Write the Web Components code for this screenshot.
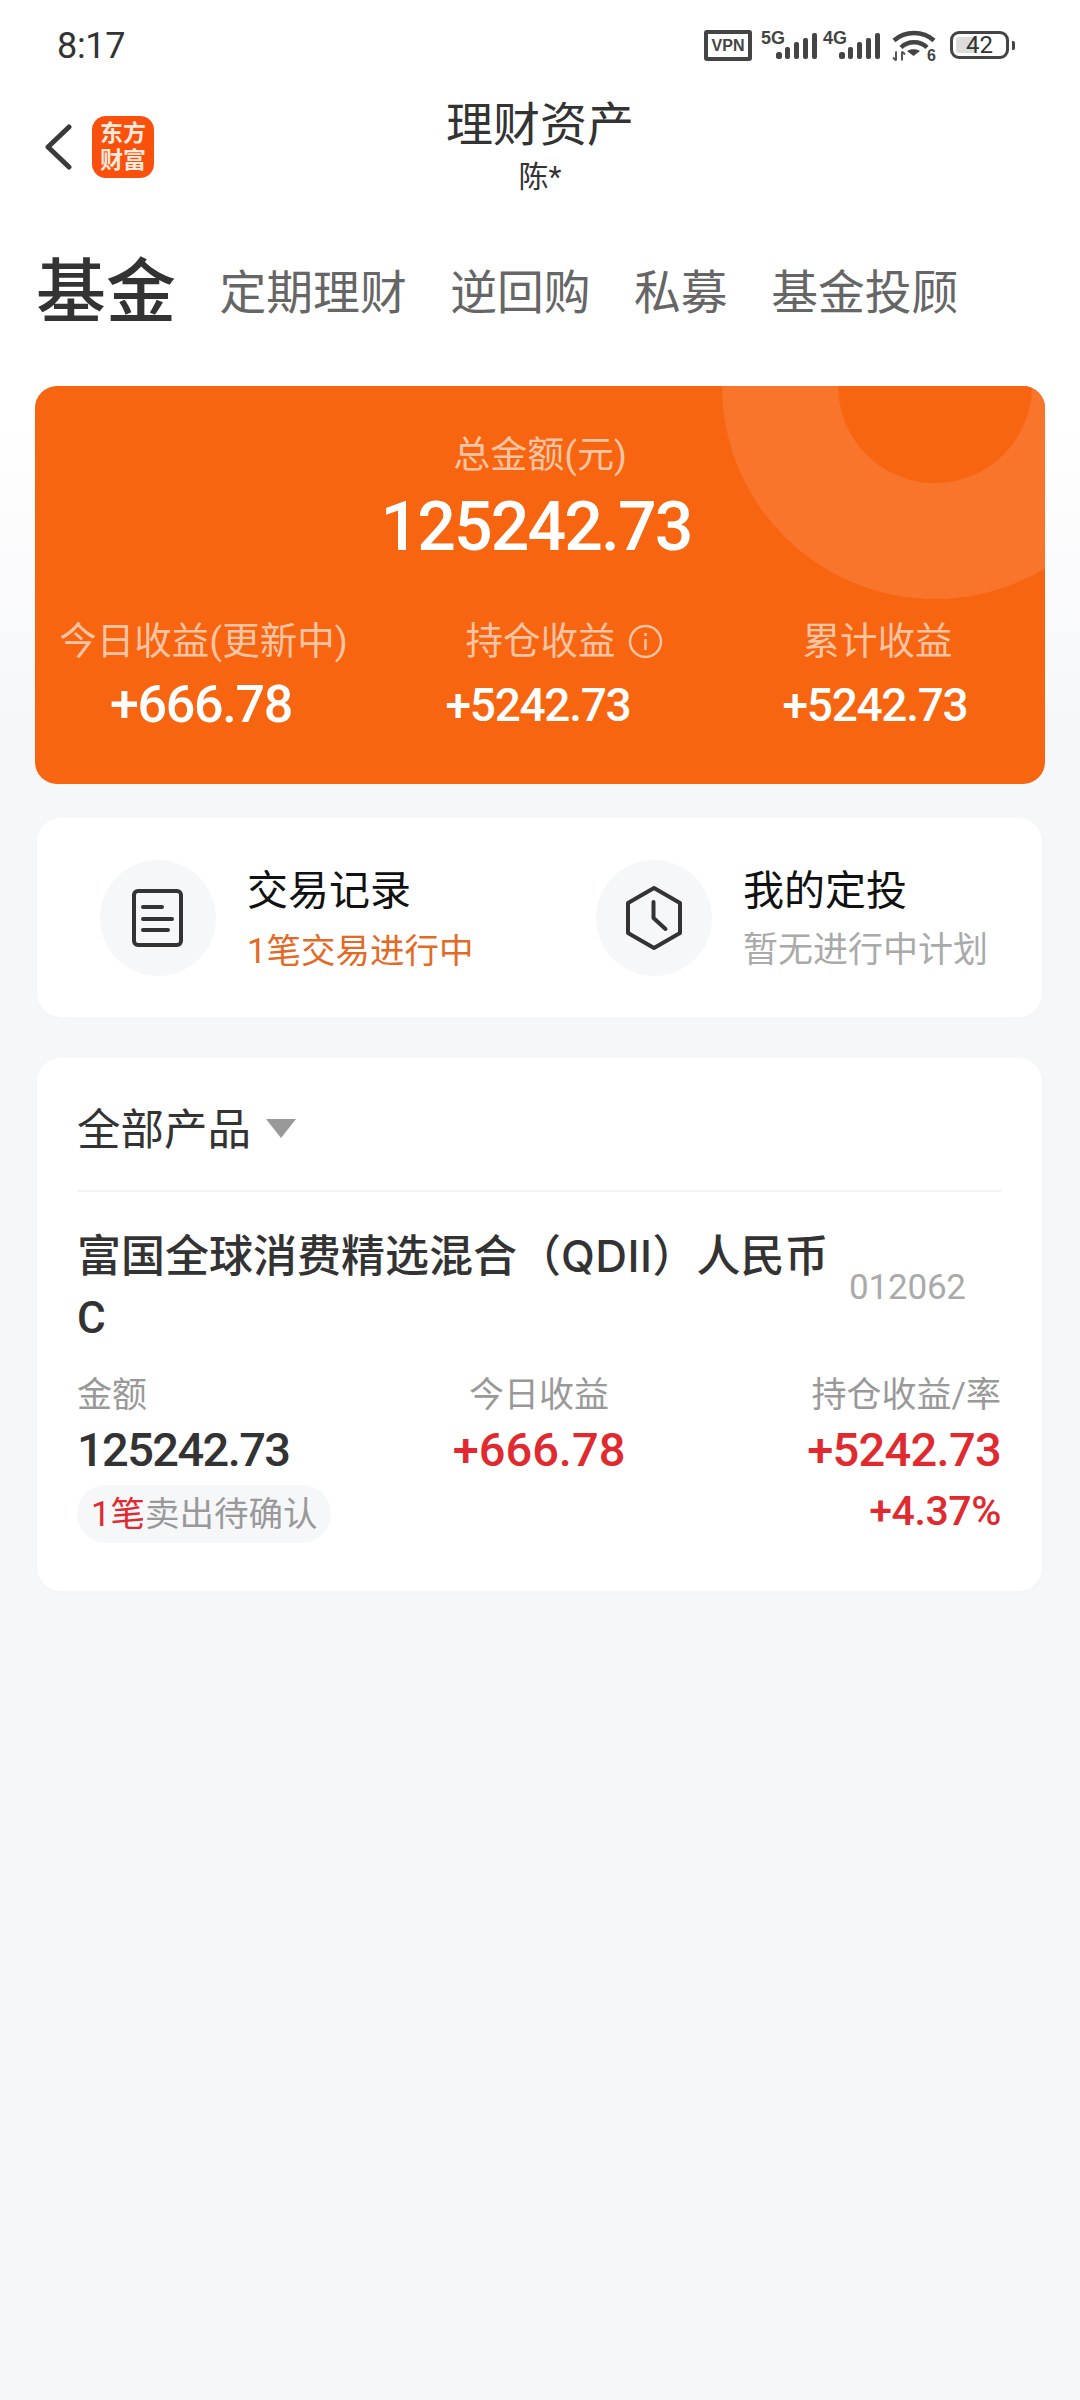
<!DOCTYPE html>
<html lang="zh-CN"><head><meta charset="utf-8"><title>理财资产</title>
<style>
html,body{margin:0;padding:0;background:#f6f7f9}
body{width:1080px;min-height:2400px;overflow:hidden;font-family:Roboto,"Noto Sans CJK SC",sans-serif;color:#333;background:linear-gradient(#fff 0,#fff 400px,#f6f7f9 720px)}
</style></head><body>
<status-bar></status-bar>
<nav-header></nav-header>
<tab-strip></tab-strip>
<asset-summary></asset-summary>
<quick-card></quick-card>
<product-card></product-card>
<script>
const FONT='Roboto,"Noto Sans CJK SC",sans-serif';
function def(name,html){
  customElements.define(name,class extends HTMLElement{
    constructor(){super();const r=this.attachShadow({mode:'open'});r.innerHTML=html;}
  });
}
const bars=`<svg width="41" height="26" viewBox="0 0 41 26" fill="#444"><rect x="0" y="19" width="6" height="7" rx="2.500"/><rect x="9" y="14" width="5" height="12" rx="2"/><rect x="18" y="9" width="5" height="17" rx="2"/><rect x="27" y="5" width="5" height="21" rx="2"/><rect x="36" y="0" width="5" height="26" rx="2"/></svg>`;
def('status-bar',`<style>
:host{display:flex;height:88px;box-sizing:border-box;padding:0 65px 0 57px;justify-content:space-between;align-items:flex-start;font-family:${FONT};color:#333}
.t{font-size:36px;line-height:42px;margin-top:25px;letter-spacing:-.3px}
.r{display:flex;align-items:flex-start;margin-top:30px}
.vpn{width:48px;height:31px;box-sizing:border-box;border:4px solid #444;border-radius:3px;font:700 16px/23px "Liberation Sans",sans-serif;text-align:center;color:#444;margin-right:9px}
.net{position:relative;height:31px}
.net.a{width:56px;margin-right:6px}
.net.b{width:57px;margin-right:12px}
.net b{position:absolute;left:0;top:-1px;font:700 18px/18px "Liberation Sans",sans-serif;color:#444}
.net svg{position:absolute;right:0;top:3px}
.wifi{position:relative;width:44px;height:33px;margin-right:14px}
.wifi b{position:absolute;right:0;top:18px;font:700 16px/16px "Liberation Sans",sans-serif;color:#444}
.bat{display:flex;align-items:center;margin-top:1px}
.cell{position:relative;width:59px;height:28px;box-sizing:border-box;border:3px solid #444;border-radius:9px;text-align:center;font:400 24px/22px Roboto,sans-serif;color:#333}
.cell i{position:absolute;left:3px;top:3px;bottom:3px;width:20px;background:#ddd;border-radius:3px}
.cell span{position:relative}
.nub{width:3px;height:9px;background:#444;border-radius:0 2px 2px 0;margin-left:3px}
</style>
<div class="t">8:17</div>
<div class="r"><div class="vpn">VPN</div>
<div class="net a"><b>5G</b>${bars}</div><div class="net b"><b>4G</b>${bars}</div>
<div class="wifi"><svg width="44" height="33" viewBox="0 0 44 33" fill="none" stroke="#444" stroke-width="4.500"><path d="M2 10.500C13 .5 31 .5 42 10.500"/><path d="M9 17.500C16 10.500 28 10.500 35 17.500"/><path d="M21.500 26l-6.500-5c3.500-2.500 9.500-2.500 13 0z" fill="#444" stroke="none"/><path d="M4 21.500v9M1 27.500l3 3M10 30.500v-9M10 21.500l3 3" stroke-width="2" stroke="#555"/></svg><b>6</b></div>
<div class="bat"><div class="cell"><i></i><span>42</span></div><div class="nub"></div></div>
</div>`);
def('nav-header',`<style>
:host{display:block;position:relative;height:132px;font-family:${FONT}}
.l{display:flex;align-items:center;height:62px;padding:28px 0 0 45px;gap:20px}
.logo{width:62px;height:62px;border-radius:14px;background:#f9500b;color:#ffe9dc;font:700 23px/27px "Liberation Serif","Noto Sans CJK SC",sans-serif;display:flex;flex-direction:column;align-items:center;justify-content:center}
.c{position:absolute;left:0;right:0;top:12px;text-align:center}
.a{font-size:47px;line-height:50px;color:#333}
.b{font-size:30px;line-height:36px;margin-top:9px;color:#333}
</style>
<div class="l"><svg width="27" height="46" viewBox="0 0 27 46" fill="none" stroke="#3a3a3a" stroke-width="5" stroke-linecap="round" stroke-linejoin="round"><path d="M24 3L3 23l21 20"/></svg>
<div class="logo"><span>东方</span><span>财富</span></div></div>
<div class="c"><div class="a">理财资产</div><div class="b">陈*</div></div>`);
def('tab-strip',`<style>
:host{display:flex;align-items:center;height:80px;margin-top:33px;padding-left:36px;gap:43.500px;font:400 46.800px/60px ${FONT};color:#666}
.on{font-size:70px;font-weight:500;color:#333}
span{white-space:nowrap}
</style><span class="on">基金</span><span>定期理财</span><span>逆回购</span><span>私募</span><span>基金投顾</span>`);
def('stat-col',`<style>
:host{display:block;text-align:center}
.k{font-size:37.500px;line-height:44px;color:#fdc4a4;display:flex;justify-content:center;align-items:center}
.v{font-size:var(--vs,46px);line-height:60px;font-weight:500;color:#fff;margin-top:12px;padding-right:5px;letter-spacing:-1.300px}
::slotted(svg){margin:0 -47px 0 12px}
</style><div class="k"><slot name="k"></slot></div><div class="v"><slot name="v"></slot></div>`);
def('asset-summary',`<style>
:host{display:block;position:relative;overflow:hidden;box-sizing:border-box;width:1010px;height:398px;margin:53px 0 0 35px;padding-top:48px;border-radius:22px;background:#f76510;font-family:${FONT};text-align:center}
.ring{position:absolute;left:687px;top:-213px;width:426px;height:426px;border-radius:50%;background:#f8752b}
.ring::after{content:"";position:absolute;left:116px;top:116px;width:194px;height:194px;border-radius:50%;background:#f76510}
.in{position:relative}
.k{font-size:37px;line-height:44px;color:#fdc4a4}
.v{font-size:68px;line-height:80px;font-weight:500;color:#fff;margin-top:9px;padding-right:8px;letter-spacing:-1.900px}
.g{display:grid;grid-template-columns:repeat(3,337px);margin-top:52px}
</style><div class="ring"></div><div class="in">
<div class="k">总金额(元)</div><div class="v">125242.73</div>
<div class="g">
<stat-col style="--vs:52px"><span slot="k">今日收益(更新中)</span><span slot="v">+666.78</span></stat-col>
<stat-col><span slot="k">持仓收益</span><svg slot="k" width="35" height="35" viewBox="0 0 35 35" fill="none" stroke="#fdc4a4" stroke-width="2.500"><circle cx="17.500" cy="17.500" r="15.500"/><path d="M17.500 15v11"/><path d="M17.500 9v3"/></svg><span slot="v">+5242.73</span></stat-col>
<stat-col><span slot="k">累计收益</span><span slot="v">+5242.73</span></stat-col>
</div></div>`);
def('quick-item',`<style>
:host{display:flex;align-items:center;gap:31px}
.i{width:116px;height:116px;border-radius:50%;background:#f6f7f9;display:flex;align-items:center;justify-content:center;flex:none}
.a{font-size:41px;line-height:50px;color:#111;margin-top:3px}
.b{font-size:35px;line-height:44px;margin-top:13px;color:#aaa;white-space:nowrap}
::slotted([slot=sub].hot){color:#e36a25;font-size:34.500px}
</style><div class="i"><slot name="icon"></slot></div><div><div class="a"><slot name="title"></slot></div><div class="b"><slot name="sub"></slot></div></div>`);
def('quick-card',`<style>
:host{display:grid;grid-template-columns:496px 1fr;grid-template-rows:116px;align-content:start;box-sizing:border-box;width:1005px;height:199px;margin:34px 0 0 37px;padding:42px 0 0 63px;background:#fff;border-radius:24px;font-family:${FONT};box-shadow:0 2px 12px rgba(0,0,0,.012)}
</style>
<quick-item><svg slot="icon" width="54" height="60" viewBox="0 0 54 60" fill="none" stroke="#333" stroke-width="4" stroke-linecap="round" stroke-linejoin="round"><rect x="3" y="3" width="47" height="54" rx="4"/><path d="M12 19h19M12 31h29M12 42h25"/></svg><span slot="title">交易记录</span><span slot="sub" class="hot">1笔交易进行中</span></quick-item>
<quick-item><svg slot="icon" width="58" height="66" viewBox="0 0 58 66" fill="none" stroke="#333" stroke-width="4" stroke-linecap="round" stroke-linejoin="round"><path d="M29 3l26 15v30L29 63 3 48V18z"/><path d="M28.500 17v16l12 11"/></svg><span slot="title">我的定投</span><span slot="sub">暂无进行中计划</span></quick-item>`);
def('metric-col',`<style>
:host{display:block;text-align:var(--a,left)}
.k{font-size:35px;line-height:44px;color:#999;white-space:nowrap}
.v{font-size:47px;line-height:56px;font-weight:500;margin-top:4px;color:var(--c,#333);letter-spacing:var(--ls,-.7px)}
</style><div class="k"><slot name="k"></slot></div><div class="v"><slot name="v"></slot></div><slot></slot>`);
def('product-card',`<style>
:host{display:block;box-sizing:border-box;width:1005px;height:533px;margin:41px 0 0 37px;padding:42px 41px 0 40px;background:#fff;border-radius:24px;font-family:${FONT};box-shadow:0 2px 12px rgba(0,0,0,.012)}
.h{display:flex;align-items:center;gap:15px;height:60px;font-size:43.500px;color:#333;padding-bottom:30px;border-bottom:2px solid #f2f3f5;line-height:60px}
.h span:first-child{position:relative;top:1px}
.tri{width:0;height:0;border-left:15px solid transparent;border-right:15px solid transparent;border-top:19px solid #999;margin-top:-4px}
.n{display:flex;align-items:center;margin-top:34px}
.name{flex:0 0 772px;font-size:44px;line-height:61px;font-weight:500;color:#333}
.name span{font-family:Inter,sans-serif;letter-spacing:.5px}
.code{font-size:35px;color:#aaa;letter-spacing:-.2px}
.g{display:grid;grid-template-columns:repeat(3,1fr);margin-top:25px}
.pill{display:inline-block;box-sizing:border-box;height:58px;margin:7px 0 0 0;padding:0 14px 0 14px;border-radius:29px;background:#f6f7f9;font-size:34.500px;line-height:58px;color:#999;white-space:nowrap}
.pill b{font-weight:400;color:#e02a2f}
.rate{font-size:41px;line-height:48px;font-weight:500;color:#e02a2f;margin-top:9px;letter-spacing:-.4px}
</style>
<div class="h"><span>全部产品</span><span class="tri"></span></div>
<div class="n"><div class="name">富国全球消费精选混合（<span>QDII</span>）人民币<br>C</div><div class="code">012062</div></div>
<div class="g">
<metric-col style="--ls:-1.600px"><span slot="k">金额</span><span slot="v">125242.73</span><div class="pill"><b>1笔</b>卖出待确认</div></metric-col>
<metric-col style="--a:center;--c:#e02a2f;--ls:0"><span slot="k">今日收益</span><span slot="v">+666.78</span></metric-col>
<metric-col style="--a:right;--c:#e02a2f"><span slot="k">持仓收益/率</span><span slot="v">+5242.73</span><div class="rate">+4.37%</div></metric-col>
</div>`);
</script></body></html>
